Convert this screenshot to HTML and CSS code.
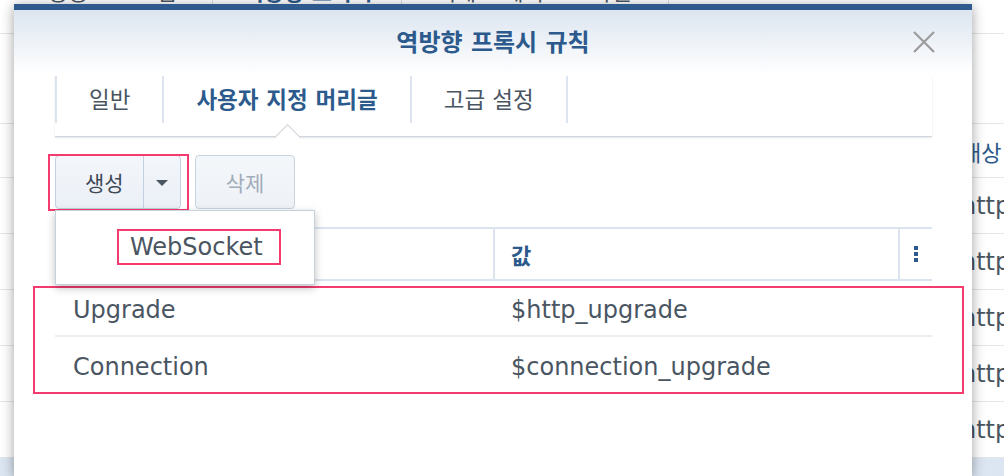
FILE: index.html
```html
<!DOCTYPE html>
<html lang="ko">
<head>
<meta charset="utf-8">
<title>역방향 프록시 규칙</title>
<link rel="stylesheet" href="styles.css">
</head>
<body>
<div class="bg">
  <div class="bg-top">
    <div class="bg-tab">응용 프로그램</div>
    <div class="bg-tab active">역방향 프록시</div>
    <div class="bg-tab">액세스 제어 프로파일</div>
  </div>
  <div class="bg-toolbar"></div>
  <div class="bg-row bg-head"><span>대상</span></div>
  <div class="bg-row"><span>http://localhost:5000</span></div>
  <div class="bg-row"><span>http://localhost:8080</span></div>
  <div class="bg-row"><span>http://localhost:8096</span></div>
  <div class="bg-row"><span>http://localhost:9000</span></div>
  <div class="bg-row"><span>http://localhost:3000</span></div>
  <div class="bg-row selected"><span>http://localhost:8443</span></div>
</div>

<div class="dialog">
  <div class="dlg-head">
    <div></div>
    <div class="dlg-title">역방향 프록시 규칙</div>
    <div class="dlg-close">
      <svg width="24" height="22" viewBox="0 0 24 22"><path d="M2 1 L22 21 M22 1 L2 21" stroke="#9b9b9b" stroke-width="2.2" fill="none"/></svg>
    </div>
  </div>

  <div class="tabs">
    <div class="tab">일반</div>
    <div class="tab active">사용자 지정 머리글</div>
    <div class="tab">고급 설정</div>
  </div>

  <div class="content">
    <div class="toolbar">
      <div class="split">
        <div class="btn-main">생성</div>
        <div class="btn-arrow"><span class="caret"></span></div>
        <div class="menu">
          <div class="menu-item"><span class="mark">WebSocket</span></div>
        </div>
      </div>
      <div class="btn disabled">삭제</div>
    </div>

    <div class="grid">
      <div class="thead">
        <div class="th">머리글 이름</div>
        <div class="th">값</div>
        <div class="th th-more"><span class="dots"><i></i><i></i><i></i></span></div>
      </div>
      <div class="rows">
        <div class="row"><div class="td">Upgrade</div><div class="td td-val">$http_upgrade</div></div>
        <div class="row"><div class="td">Connection</div><div class="td td-val">$connection_upgrade</div></div>
      </div>
    </div>
  </div>
</div>
</body>
</html>
```

FILE: styles.css
```css
* { box-sizing: border-box; }

html, body {
  margin: 0;
  padding: 0;
  width: 1004px;
  height: 476px;
  overflow: hidden;
  background: #ffffff;
  font-family: "DejaVu Sans", "Noto Sans CJK KR", sans-serif;
  color: #4a5562;
}

/* ---------- background window ---------- */
.bg {
  width: 1004px;
  height: 476px;
  overflow: hidden;
}

.bg-top {
  height: 34px;
  display: flex;
  align-items: flex-start;
  overflow: hidden;
  border-bottom: 1px solid #e3e6ea;
}

.bg-tab {
  margin-top: -18px;
  height: 40px;
  line-height: 22px;
  font-size: 22px;
  padding: 0 36px 0 34px;
  border-right: 1px solid #d9dfe6;
  color: #4a5562;
  white-space: nowrap;
}
.bg-tab:first-child { padding-left: 48px; }
.bg-tab.active {
  color: #2c5a8c;
  font-weight: bold;
  padding: 0 28px 0 30px;
}

.bg-toolbar {
  height: 90px;
  border-bottom: 1px solid #e3e7eb;
}

.bg-row {
  height: 56px;
  display: flex;
  align-items: center;
  padding-left: 961px;
  border-bottom: 1px solid #e3e7eb;
  font-size: 24px;
  white-space: nowrap;
  color: #4a5562;
}
.bg-head {
  height: 54px;
  font-size: 22px;
  color: #2c5a8c;
}
.bg-row.selected {
  background: #dce6f2;
  border-bottom: none;
}

/* ---------- dialog ---------- */
.dialog {
  position: absolute;
  left: 14px;
  top: 4px;
  width: 958px;
  height: 472px;
  background: #ffffff;
  border-top: 6px solid #2e5a8e;
  box-shadow: 0 2px 12px rgba(0, 0, 0, 0.38);
  display: flex;
  flex-direction: column;
}

.dlg-head {
  height: 64px;
  flex: none;
  background: linear-gradient(#dce5f0, #ffffff);
  display: grid;
  grid-template-columns: 1fr auto 1fr;
  align-items: center;
}

.dlg-title {
  font-size: 24px;
  font-weight: bold;
  color: #2c5a8c;
  margin-top: -3px;
}

.dlg-close {
  justify-self: end;
  margin-right: 36px;
  width: 24px;
  height: 22px;
}
.dlg-close svg { display: block; }

/* tabs */
.tabs {
  flex: none;
  margin: 2px 40px 0 41px;
  display: flex;
  padding-bottom: 13px;
  border-bottom: 1px solid #cfd5dc;
  box-shadow: 0 1px 2px rgba(0, 0, 0, 0.10);
}

.tab {
  position: relative;
  height: 47px;
  display: flex;
  align-items: center;
  padding: 0 32px 3px;
  border-left: 2px solid #dce5ef;
  font-size: 22.5px;
  color: #4a5562;
  white-space: nowrap;
}
.tab:last-child { border-right: 2px solid #dce5ef; }

.tab.active {
  color: #2c5a8c;
  font-weight: bold;
}
.tab.active::after {
  content: "";
  position: absolute;
  left: calc(50% - 9px);
  top: 52px;
  width: 18px;
  height: 18px;
  background: #ffffff;
  border-top: 1px solid #cfd5dc;
  border-left: 1px solid #cfd5dc;
  transform: rotate(45deg);
}

/* content */
.content {
  padding: 18px 40px 0 41px;
}

.toolbar {
  display: flex;
  gap: 14px;
  height: 54px;
}

.split {
  position: relative;
  display: flex;
  height: 54px;
  border: 1px solid #c4d0dd;
  border-radius: 4px;
  background: linear-gradient(#f3f6fa, #ebf0f7);
}
.split::after {
  content: "";
  position: absolute;
  top: -2px;
  right: -9px;
  bottom: -3px;
  left: -8px;
  border: 2px solid #f43b6f;
  pointer-events: none;
}

.btn-main {
  width: 87px;
  display: flex;
  align-items: center;
  padding-left: 29px;
  font-size: 21px;
  color: #3e4955;
}

.btn-arrow {
  width: 37px;
  border-left: 1px solid #c4d0dd;
  display: flex;
  align-items: center;
  justify-content: center;
}
.caret {
  width: 0;
  height: 0;
  border-left: 6px solid transparent;
  border-right: 6px solid transparent;
  border-top: 6px solid #4a5562;
  margin-top: 2px;
}

.btn {
  width: 100px;
  height: 54px;
  display: flex;
  align-items: center;
  justify-content: center;
  border: 1px solid #c9d4e0;
  border-radius: 4px;
  background: linear-gradient(#f4f7fa, #eef2f7);
  font-size: 21px;
}
.btn.disabled { color: #a2acb7; }

.menu {
  position: absolute;
  top: calc(100% + 2px);
  left: -1px;
  width: 260px;
  height: 75px;
  background: #ffffff;
  border: 1px solid #c6d1de;
  box-shadow: 0 3px 8px rgba(0, 0, 0, 0.25);
  z-index: 3;
  padding: 18px 0 0 61px;
}

.mark {
  display: inline-block;
  border: 2px solid #f43b6f;
  padding: 2px 16px 2px 11px;
  font-size: 24px;
  line-height: 28px;
  color: #4a5562;
  white-space: nowrap;
}

/* grid */
.grid {
  margin-top: 18px;
}

.thead {
  display: grid;
  grid-template-columns: 438px 405px 34px;
  height: 54px;
  border-top: 2px solid #dbe4ee;
  border-bottom: 2px solid #dbe4ee;
}

.th {
  display: flex;
  align-items: center;
  padding-left: 18px;
  font-size: 22px;
  font-weight: bold;
  color: #2c5a8c;
}
.th + .th {
  border-left: 2px solid #dbe4ee;
  padding-left: 16px;
}
.th-more {
  padding-left: 0 !important;
  justify-content: center;
}

.dots {
  display: flex;
  flex-direction: column;
  gap: 2px;
}
.dots i {
  display: block;
  width: 4px;
  height: 4px;
  background: #2c5a8c;
}

.rows {
  position: relative;
}
.rows::after {
  content: "";
  position: absolute;
  top: 5px;
  right: -32px;
  bottom: -1px;
  left: -22px;
  border: 2px solid #f43b6f;
  pointer-events: none;
}

.row {
  display: grid;
  grid-template-columns: 438px 439px;
  height: 56px;
  align-items: center;
  border-bottom: 2px solid #e9eef3;
}
.row:last-child { border-bottom: none; }

.td {
  padding: 3px 0 0 18px;
  font-size: 24px;
  color: #4a5562;
  white-space: nowrap;
}
```
